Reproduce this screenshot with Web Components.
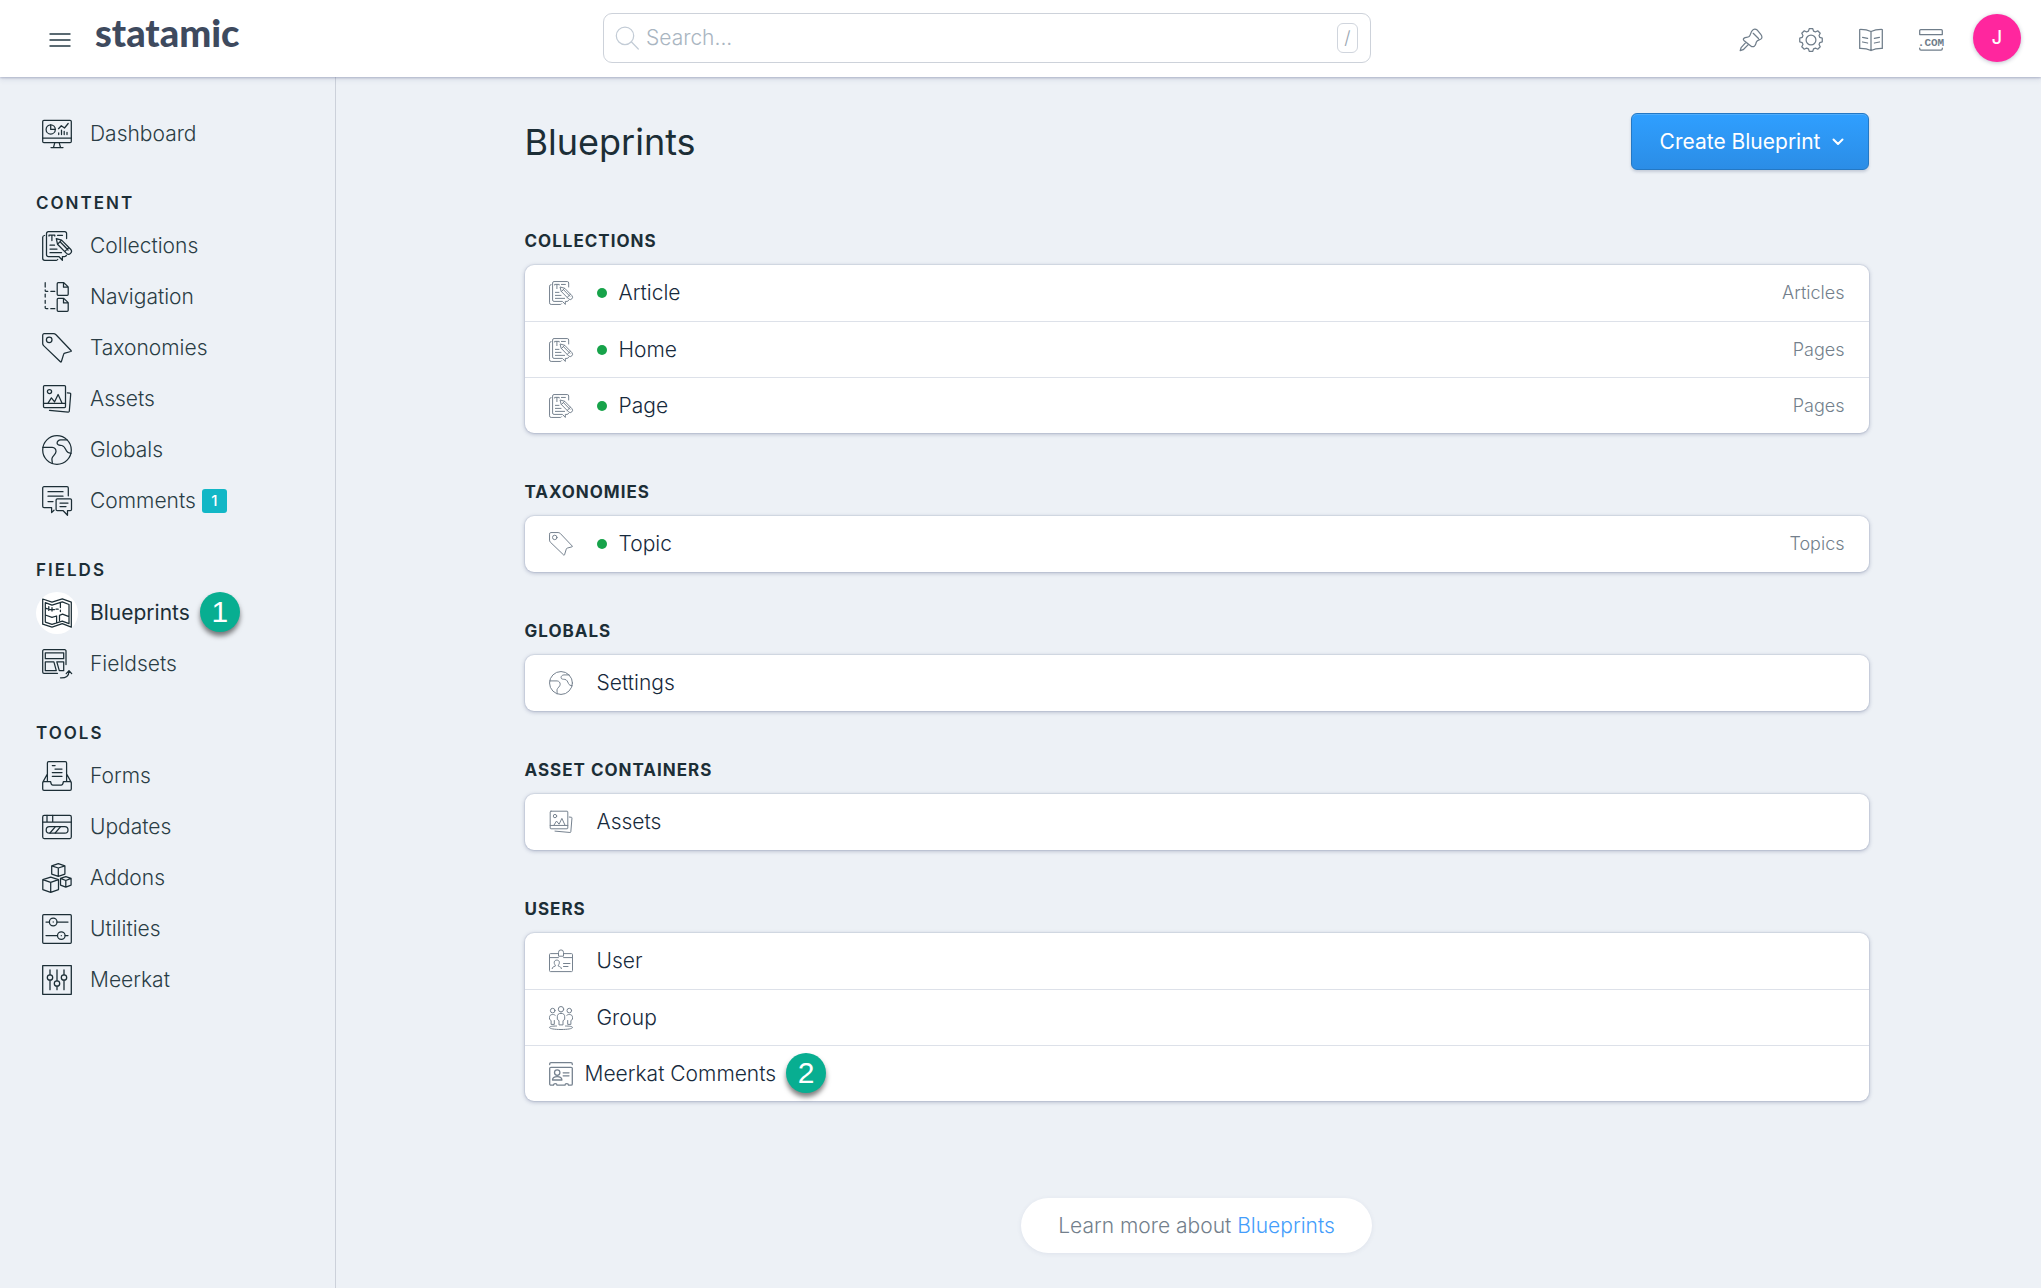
<!DOCTYPE html>
<html lang="en">
<head>
<meta charset="utf-8">
<title>Blueprints</title>
<style>
  html, body { margin: 0; min-height: 100%; }
  body {
    --canvas: #edf1f6;
    --ink: #1c2e36;
    --muted: #737f8c;
    --line: #dde1e9;
    background: var(--canvas);
    color: var(--ink);
    font-family: Inter, "Liberation Sans", sans-serif;
    font-size: 21px;
    line-height: 30px;
    font-weight: 300;
  }
</style>
</head>
<body>
<cp-app>
  <cp-header slot="header"></cp-header>
  <cp-sidebar slot="sidebar">
    <nav-group>
      <nav-item icon="dashboard">Dashboard</nav-item>
    </nav-group>
    <nav-group heading="Content">
      <nav-item icon="collections">Collections</nav-item>
      <nav-item icon="navigation">Navigation</nav-item>
      <nav-item icon="taxonomies">Taxonomies</nav-item>
      <nav-item icon="assets">Assets</nav-item>
      <nav-item icon="globals">Globals</nav-item>
      <nav-item icon="comments" count="1">Comments</nav-item>
    </nav-group>
    <nav-group heading="Fields">
      <nav-item icon="blueprints" current>Blueprints<step-marker slot="after">1</step-marker></nav-item>
      <nav-item icon="fieldsets">Fieldsets</nav-item>
    </nav-group>
    <nav-group heading="Tools">
      <nav-item icon="forms">Forms</nav-item>
      <nav-item icon="updates">Updates</nav-item>
      <nav-item icon="addons">Addons</nav-item>
      <nav-item icon="utilities">Utilities</nav-item>
      <nav-item icon="meerkat">Meerkat</nav-item>
    </nav-group>
  </cp-sidebar>

  <page-title>Blueprints<create-button slot="action">Create Blueprint</create-button></page-title>
  <blueprint-section heading="Collections">
    <blueprint-row icon="collections" published meta="Articles">Article</blueprint-row>
    <blueprint-row icon="collections" published meta="Pages">Home</blueprint-row>
    <blueprint-row icon="collections" published meta="Pages">Page</blueprint-row>
  </blueprint-section>
  <blueprint-section heading="Taxonomies">
    <blueprint-row icon="taxonomies" published meta="Topics">Topic</blueprint-row>
  </blueprint-section>
  <blueprint-section heading="Globals">
    <blueprint-row icon="globals">Settings</blueprint-row>
  </blueprint-section>
  <blueprint-section heading="Asset Containers">
    <blueprint-row icon="assets">Assets</blueprint-row>
  </blueprint-section>
  <blueprint-section heading="Users">
    <blueprint-row icon="user">User</blueprint-row>
    <blueprint-row icon="group">Group</blueprint-row>
    <blueprint-row icon="comment-card" compact>Meerkat Comments<step-marker slot="after">2</step-marker></blueprint-row>
  </blueprint-section>
  <docs-callout topic="Blueprints">Learn more about</docs-callout>
</cp-app>

<script>
// Outline of the settings cog: eight rounded teeth around a ring.
function cogPath() {
  const pts = [];
  for (let i = 0; i < 8; i++) {
    for (const [d, r] of [[-16, 9.2], [-9, 11.4], [9, 11.4], [16, 9.2]]) {
      const a = (i * 45 + d - 90) * Math.PI / 180;
      pts.push((12 + r * Math.cos(a)).toFixed(2) + ' ' + (12 + r * Math.sin(a)).toFixed(2));
    }
  }
  return 'M' + pts.join('L') + 'z';
}

// name: [viewBox size, stroke width, markup]
const ICONS = {
  dashboard: [30, 1.25, '<rect x=".7" y="1.4" width="28.6" height="22.3" rx="1.2"/><path d="M.7 19h28.6M12.8 23.7l-1.3 4.8M17.2 23.7l1.3 4.8M9 28.5h12M16.5 9.7l2.8-3 3.2 2.3 3.7-4.5M16.7 15.5v-1.6M19.5 15.5v-4.5M22.2 15.5v-3.2M25 15.5v-2.2"/><circle cx="8.7" cy="10.4" r="4.6"/><path d="M8.7 5.8v4.6h4.6"/>'],
  collections: [30, 1.25, '<path d="M24.6 7.5V2.5A1.8 1.8 0 0 0 22.8.7H6.3a1.8 1.8 0 0 0-1.8 1.8v21.2a1.8 1.8 0 0 0 1.8 1.8h10.5l3.6 3.8v-3.8h2.4a1.8 1.8 0 0 0 1.6-1.2"/><path d="M2.6 4.5A2 2 0 0 0 .7 6.4v20.9a2 2 0 0 0 2 2h11.6a2 2 0 0 0 1.4-.8M7 5V4.2h5.8V5M9.9 4.2v5.3M15.5 4.3h5M8 14.2h4.5M8 18h7M8 21.7h11.5"/><path d="M14.3 7.6l5.3 1.5 9 9.2a2.9 2.9 0 0 1-4.1 4.1l-9-9.2zM19.6 9.1l-4.1 4.1M18.3 11l7.8 8M26.8 16.6l-4.1 4"/>'],
  navigation: [30, 1.25, '<path d="M16.2.7h5.6l4.4 4.2v7.4a1 1 0 0 1-1 1h-9a1 1 0 0 1-1-1V1.7a1 1 0 0 1 1-1zM21.5.9v4.3h4.6M16.2 16.4h5.6l4.4 4.2v7.7a1 1 0 0 1-1 1h-9a1 1 0 0 1-1-1V17.4a1 1 0 0 1 1-1zM21.5 16.6v4.3h4.6"/><path d="M3.2.7V5M3.2 12v3M3.2 18.3v3M3.2 24.3v1.4a1 1 0 0 0 1 1h1.6M8.8 26.7h4M3.2 7.8v.6a.9.9 0 0 0 .9.9h1.7M8.8 9.3h4"/>'],
  taxonomies: [30, 1.25, '<path d="M.7 2.2A1.5 1.5 0 0 1 2.2.7h9.2a4 4 0 0 1 2.6 1l15 15.8c.5.5.4.8-.2 1l-5.9 1.6a1.8 1.8 0 0 0-1.3 1.3l-2.2 7.1c-.2.6-.6.7-1 .3L1.6 12.6a3 3 0 0 1-.9-2z"/><circle cx="7.2" cy="6.8" r="2.8"/>'],
  assets: [30, 1.25, '<rect x="1.5" y="1.5" width="22" height="22" rx="1"/><path d="M1.5 19.3h22M6 19.2l3.4-5.4 3.2 4 3.5-7.3 4 8.7M25.3 8.8l2.6.3a.9.9 0 0 1 .8 1L27.3 27.2a1 1 0 0 1-1.1.9L7.5 26.4"/><circle cx="7.5" cy="7.6" r="2.1"/>'],
  globals: [30, 1.25, '<circle cx="15" cy="15" r="14.3"/><path d="M.9 12.4h9.3c2.5.2 3.8 2.2 3.8 4.2 0 2.7-3.5 4.4-4 6.8-.4 1.9.6 3.6.2 5.1M25 4.9h-6.3c-2.3.1-3.7 1.7-3.6 3.4.2 2.3 2.6 1.9 4.7 2.2 2.6.4 3.3 2.5 4.6 5.3.8 1.7 2 2.3 4.6 2.6"/>'],
  comments: [30, 1.25, '<path d="M26.3 9.8V2A1.3 1.3 0 0 0 25 .7H2A1.3 1.3 0 0 0 .7 2v18.2a1.3 1.3 0 0 0 1.3 1.3h7.6v5l2.4-2.3M6 5.7h15M6 10.2h15M6 15.5h5"/><path d="M15.3 12.8h13a1.2 1.2 0 0 1 1.2 1.2v9.5a1.2 1.2 0 0 1-1.2 1.2h-2.8v4.6l-4.3-4.6h-5.9a1.2 1.2 0 0 1-1.2-1.2V14a1.2 1.2 0 0 1 1.2-1.2zM18 17h8M18 20.6h6"/>'],
  blueprints: [30, 1.25, '<path d="M.7 1L10 4.2 20.3.8l9 3.4v25l-9-3.5L10 29.2.7 26.2z"/><path d="M3.3 4.7L10 7.2l10.3-3.3L27 6.5v19.2l-6.7-2.5L10 26.4l-6.7-2.3zM3.3 17l6.7 2.3 4.6-1.3v6.8M17.5 17.3l3-1.1L27 18.6M17.5 17.3v5.2M4 10.3l4 1.2h4.5M6.8 8.6v3.8M10 9.5v3.6M18.4 5.2v4.3M18.4 12v1.5M14 11.2h2.2"/>'],
  fieldsets: [30, 1.25, '<path d="M24 15.5V2A1.3 1.3 0 0 0 22.7.7H2A1.3 1.3 0 0 0 .7 2v21a1.3 1.3 0 0 0 1.3 1.3h13.5"/><path d="M3.3 3.8h18.4v5.9H3.3zM3.3 12.9h8.6l2.4 8.8h-11zM14.8 12.9h6.9v8.8h-4.4zM18.5 28.8c5.5.2 8.5-1.6 8.5-6.8M24.2 24.6l2.8-3 2.7 3"/>'],
  forms: [30, 1.25, '<path d="M2 20.6h6.6c.3 2.2 1 3.4 2.3 3.4h8.2c1.3 0 2-1.2 2.3-3.4H28a1.3 1.3 0 0 1 1.3 1.3V28a1.3 1.3 0 0 1-1.3 1.3H2A1.3 1.3 0 0 1 .7 28v-6.1A1.3 1.3 0 0 1 2 20.6zM5.4 20.4V2A1.3 1.3 0 0 1 6.7.7h16.6A1.3 1.3 0 0 1 24.6 2v18.4M5.2 13.3L1 20.9M24.8 13.3l4.2 7.6M10.3 4.6h2.8M13 8h7M10.3 11.6H20M10.3 15.3H20"/>'],
  updates: [30, 1.25, '<rect x=".7" y="3.4" width="28.6" height="23.2" rx="1.5"/><path d="M.7 10h28.6M5 3.4V10M10.7 3.4V10"/><rect x="4.2" y="14.7" width="21.8" height="6.4" rx="3.2"/><path d="M8 21l5.2-6.2M13.2 21l5.2-6.2"/>'],
  addons: [30, 1.25, '<path d="M16.3.7l6.6 2.2v8.2l-6.6 2.2-6.6-2.2V2.9zM9.7 2.9L16.3 5l6.6-2.1M16.3 5v8.3M8.7 14.1l7.8 2.5v10l-7.8 2.8-7.9-2.8v-10zM.8 16.6l7.9 2.8 7.8-2.8M8.7 19.4v10M23.8 13.6l5.3 1.8v6.7l-5.3 2.1-5.3-2.1v-6.7zM18.5 15.4l5.3 2.1 5.3-2.1M23.8 17.5v6.7"/>'],
  utilities: [30, 1.25, '<rect x=".7" y=".7" width="28.6" height="28.6" rx="1"/><path d="M4 8h3.4M15 8h11M4 21.6h11.5M23.1 21.6H26M11.2 7.9v.2M19.3 21.5v.2"/><circle cx="11.2" cy="8" r="3.8"/><circle cx="19.3" cy="21.6" r="3.8"/>'],
  meerkat: [30, 1.3, '<path d="M.7.7h28.6v28.6H.7z"/><path d="M8 5v4.8M8 15.2v9.5M15 5v10.8M15 21.2v3.5M22 5v4.8M22 15.2v9.5"/><circle cx="8" cy="12.5" r="2.7"/><circle cx="15" cy="18.5" r="2.7"/><circle cx="22" cy="12.5" r="2.7"/>'],
  user: [24, 1, '<path d="M9.5 4.6h-8a1 1 0 0 0-1 1v16a1 1 0 0 0 1 1h21a1 1 0 0 0 1-1v-16a1 1 0 0 0-1-1h-8M.5 8.6h8.9M14.6 8.6h8.9"/><path d="M9.5 6.8V3.4a2.5 2.5 0 0 1 5 0v3.4zM3.2 19.6c.2-1.8 1.2-1.7 3.1-2.5v-1c-1-1-1.2-2-1-3.2.3-2.4 4.8-2.4 5 0 .2 1.2-.1 2.2-1 3.2v1c1.900.8 2.900.7 3.100 2.500M14.500 14.500h6.500M14.500 17.500h4.500"/>'],
  group: [24, 1, '<circle cx="12" cy="3.200" r="2.700"/><circle cx="3.700" cy="4.600" r="2.300"/><circle cx="20.300" cy="4.600" r="2.300"/><path d="M12 7.300c-2.800 0-3.700 1.500-3.700 3.500v2.600l1.700 1.300v4.200h4v-4.200l1.700-1.300v-2.600c0-2-.9-3.500-3.700-3.500zM6.200 9.300c-.7-.6-1.500-.8-2.500-.8-2.300 0-3.200 1.300-3.200 2.800v2l1.600 1.200v3.900h3.200v-3.900M17.800 9.300c.7-.6 1.500-.8 2.500-.8 2.300 0 3.200 1.300 3.200 2.800v2l-1.600 1.200v3.900h-3.200v-3.900M7.500 20c-4 0-7 .5-7 1.400 0 1.300 5 2.100 11.500 2.100s11.500-.8 11.500-2.100c0-.9-3-1.400-7-1.400"/>'],
  'comment-card': [24, 1.3, '<path d="M.7 2.600V2A1.300 1.300 0 0 1 2 .7h20A1.300 1.300 0 0 1 23.300 2v.6M2 5.300h20a1.200 1.200 0 0 1 1.300 1.200v15.400a1.300 1.300 0 0 1-1.300 1.300h-2.500c0-2-3.500-2-3.500 0H8c0-2-3.500-2-3.500 0H2A1.300 1.300 0 0 1 .7 21.900V6.500A1.200 1.200 0 0 1 2 5.300z"/><circle cx="8.200" cy="10.600" r="2.700"/><path d="M3.500 18c.2-4.500 9.200-4.500 9.400 0zM14.200 10.800H20M14.200 13.800H20"/>'],
  pin: [24, 1.25, '<path d="M13.200 2.700C14.500 1 16.800 1 18.500 2.300l3.300 4c1.600 2 1.500 4-.2 5-1.700.9-3.400 1-4.200 2.700-.6 1.500-.5 2.700-1.800 3.900-1.200 1-2.600 1-3.800 0L4.900 12.400c-.8-.8-.7-1.700.3-2.300 1.500-.9 3.500-.5 4.900-1.600 1.600-1.500 1.500-4 3.100-5.800zM6.900 14.300l-4.800 5.300-.9 3.100 3-1 5.300-5.300M14.200 5.300l5.300 5.200"/>'],
  cog: [24, 1.25, '<path d="' + cogPath() + '"/><circle cx="12" cy="12" r="4.900"/>'],
  book: [24, 1.25, '<path d="M12 3.500C8.500 1.900 4.500 1.400.7 1.500v18.900c4-.1 8 .5 11.300 2.100 3.300-1.600 7.300-2.200 11.300-2.100V1.500c-3.800-.1-7.800.4-11.300 2zM12 3.500v19M3.600 9.400l5 1M3.600 14l5 1M20.400 9.400l-5 1M20.400 14l-5 1"/>'],
  site: [24, 1.25, '<path d="M.7 6.500V2.700a1 1 0 0 1 1-1h20.600a1 1 0 0 1 1 1v3.800zM.7 20v.8a1.300 1.300 0 0 0 1.300 1.300h20a1.300 1.300 0 0 0 1.300-1.300V20"/><text x="12" y="18" text-anchor="middle" font-family="Liberation Sans Narrow, Liberation Mono, monospace" font-weight="700" font-size="11" fill="currentColor" stroke="none">.COM</text>'],
  search: [24, 1.25, '<circle cx="10" cy="9.800" r="8.700"/><path d="M16.300 15.800l7 7.200"/>'],
  menu: [24, 2, '<path d="M1.500 6h21M1.500 12h21M1.500 18h21" stroke-linecap="butt"/>'],
  chevron: [12, 2, '<path d="M1.500 3.500L6 8l4.500-4.500"/>']
};

function define(name, render) {
  customElements.define(name, class extends HTMLElement {
    constructor() {
      super();
      this.attachShadow({ mode: 'open' });
    }
    connectedCallback() {
      this.shadowRoot.innerHTML = render(this);
    }
  });
}
const attr = (el, name) => el.getAttribute(name) || '';

define('ui-icon', el => {
  const [size, stroke, body] = ICONS[attr(el, 'name')];
  return `<style>
    :host { display: block; flex: none; width: var(--icon-size, 24px); height: var(--icon-size, 24px); }
    svg { display: block; width: 100%; height: 100%; overflow: visible; }
  </style>
  <svg viewBox="0 0 ${size} ${size}" fill="none" stroke="currentColor" stroke-width="${stroke}" stroke-linecap="round" stroke-linejoin="round" aria-hidden="true">${body}</svg>`;
});

define('step-marker', () => `<style>
  :host {
    display: flex; flex: none; align-items: center; justify-content: center;
    width: 40px; height: 40px; border-radius: 50%; margin: 0 0 2px 10px;
    background: #08ae91; color: #fff;
    font: 400 30px/40px "Liberation Sans", sans-serif;
    box-shadow: 0 4px 5px rgba(0, 0, 0, .5);
  }
</style><slot></slot>`);

define('cp-app', () => `<style>
  :host { display: flex; flex-direction: column; min-height: 100vh; }
  .body { display: flex; flex: 1; }
  main { flex: 1; min-width: 0; padding: 36px 24px 35px 40px; }
  .content { max-width: 1344px; margin: 0 auto; }
</style>
<slot name="header"></slot>
<div class="body">
  <slot name="sidebar"></slot>
  <main><div class="content"><slot></slot></div></main>
</div>`);

define('cp-header', () => `<style>
  :host {
    display: grid; grid-template-columns: 9fr minmax(0, 768px) 10fr; align-items: center;
    box-sizing: border-box; height: 77px; padding-bottom: 1px; position: relative; background: #fff;
    box-shadow: 0 1px 2px rgba(60, 70, 120, .28), 0 2px 6px rgba(60, 70, 120, .14);
  }
  button, .tool { border: 0; padding: 0; background: none; color: inherit; font: inherit; cursor: pointer; }
  .brand { display: flex; align-items: center; gap: 23px; padding-left: 48px; }
  .toggle { color: #5a6a72; margin-top: 4px; }
  .logo {
    color: #3e4a5e; text-decoration: none; margin-bottom: 12px;
    font: 900 38px/44px Lato, sans-serif;
  }
  .search {
    display: flex; align-items: center; gap: 7px; box-sizing: border-box; height: 50px;
    padding: 0 12px 0 11px; border: 1px solid #cdd2da; border-radius: 9px; color: #c3ccd6; background: #fff;
  }
  .search label { display: block; }
  input { flex: 1; min-width: 0; border: 0; padding: 0; background: none; outline: 0; font: inherit; color: var(--ink); }
  input::placeholder { color: #a9b5c1; opacity: 1; }
  kbd {
    box-sizing: border-box; width: 21px; height: 30px; border: 1px solid #d0d5dd; border-radius: 6px;
    font: 300 18px/28px Inter, sans-serif; text-align: center; color: #98a5b1;
  }
  .tools { display: flex; align-items: center; justify-content: flex-end; gap: 36px; padding-right: 20px; color: #6f7d8a; }
  .tool { margin-top: 4px; }
  .avatar {
    width: 48px; height: 48px; border-radius: 50%; margin-left: -6px;
    background: #ff269e; color: #fff; font-size: 18px; font-weight: 500; line-height: 48px;
    box-shadow: 0 1px 4px rgba(40, 50, 90, .3);
  }
</style>
<div class="brand">
  <button class="toggle" aria-label="Toggle navigation"><ui-icon name="menu"></ui-icon></button>
  <a class="logo" href="#">statamic</a>
</div>
<div class="search">
  <label for="q" aria-label="Search"><ui-icon name="search"></ui-icon></label>
  <input id="q" type="text" placeholder="Search...">
  <kbd>/</kbd>
</div>
<div class="tools">
  <button class="tool" aria-label="Pin to favorites"><ui-icon name="pin"></ui-icon></button>
  <button class="tool" aria-label="Preferences"><ui-icon name="cog"></ui-icon></button>
  <a class="tool" href="#" aria-label="Documentation"><ui-icon name="book"></ui-icon></a>
  <a class="tool" href="#" aria-label="View site"><ui-icon name="site"></ui-icon></a>
  <button class="avatar" aria-label="Account">J</button>
</div>`);

define('cp-sidebar', () => `<style>
  :host { display: block; box-sizing: border-box; flex: none; width: 336px; padding: 31px 36px; border-right: 1px solid #ccd1da; }
  nav { display: flex; flex-direction: column; gap: 27px; }
</style><nav><slot></slot></nav>`);

define('nav-group', el => `<style>
  :host { display: block; }
  h2 { margin: 0; font-size: 17px; line-height: 34px; font-weight: 600; letter-spacing: 2px; text-transform: uppercase; }
</style>${attr(el, 'heading') && `<h2>${attr(el, 'heading')}</h2>`}<slot></slot>`);

define('nav-item', el => `<style>
  :host { display: flex; align-items: center; height: 51px; }
  a { display: flex; align-items: center; gap: 12px; color: #2a3d45; text-decoration: none; }
  .icon { display: flex; align-items: center; justify-content: center; width: 42px; height: 42px; border-radius: 50%; color: var(--ink); }
  ui-icon { --icon-size: 30px; }
  :host([current]) a { color: var(--ink); font-weight: 400; }
  :host([current]) .icon { background: #fff; }
  .count { min-width: 25px; margin-left: 6px; border-radius: 3px; background: #12b7c6; color: #fff; font-size: 15px; line-height: 24px; font-weight: 500; text-align: center; }
</style>
<a href="#"><span class="icon"><ui-icon name="${attr(el, 'icon')}"></ui-icon></span><span><slot></slot></span></a>
${el.hasAttribute('count') ? `<span class="count">${attr(el, 'count')}</span>` : ''}<slot name="after"></slot>`);

define('page-title', () => `<style>
  :host { display: flex; align-items: center; justify-content: space-between; margin-bottom: 54px; }
  h1 { margin: 0; font-size: 36px; line-height: 44px; font-weight: 400; }
</style><h1><slot></slot></h1><slot name="action"></slot>`);

define('create-button', () => `<style>
  :host { display: block; }
  button {
    display: flex; align-items: center; gap: 11px; height: 57px; padding: 0 24px 0 28px;
    border: 1px solid #2478c4; border-radius: 6px; cursor: pointer;
    background: linear-gradient(#2f9fff, #2b8de6); color: #fff; font: 400 21px/30px Inter, sans-serif;
    box-shadow: inset 0 1px 0 #4fadfc, 0 2px 3px rgba(40, 60, 100, .2);
  }
  ui-icon { --icon-size: 12px; }
</style><button><slot></slot><ui-icon name="chevron"></ui-icon></button>`);

define('blueprint-section', el => `<style>
  :host { display: block; margin-bottom: 42px; }
  h2 { margin: 0 0 7px; font-size: 17px; line-height: 34px; font-weight: 700; letter-spacing: 1px; text-transform: uppercase; }
  .card { border-radius: 9px; background: #fff; box-shadow: 0 0 0 1px rgba(60, 80, 130, .07), 0 1px 4px rgba(50, 60, 110, .35); }
</style><h2>${attr(el, 'heading')}</h2><div class="card"><slot></slot></div>`);

define('blueprint-row', el => `<style>
  :host { display: flex; align-items: center; box-sizing: border-box; height: 56px; padding: 0 24px; border-top: 1px solid var(--line); }
  :host(:first-child) { border-top: 0; }
  ui-icon { color: #76828f; margin-right: 24px; }
  :host([compact]) ui-icon { margin-right: 12px; }
  .dot { width: 10px; height: 10px; margin-right: 12px; border-radius: 50%; background: #17a34a; }
  a { color: #172a3c; text-decoration: none; }
  .meta { margin-left: auto; color: var(--muted); font-size: 18px; }
</style>
<ui-icon name="${attr(el, 'icon')}"></ui-icon>
${el.hasAttribute('published') ? '<span class="dot"></span>' : ''}
<a href="#"><slot></slot></a><slot name="after"></slot>
${el.hasAttribute('meta') ? `<span class="meta">${attr(el, 'meta')}</span>` : ''}`);

define('docs-callout', el => `<style>
  :host { display: flex; justify-content: center; margin-top: 97px; }
  p { margin: 0; padding: 0 37px; border-radius: 28px; background: #fff; color: var(--muted); line-height: 55px; box-shadow: 0 1px 5px rgba(50, 70, 110, .08); }
  a { color: #449dfb; text-decoration: none; }
</style><p><slot></slot> <a href="#">${attr(el, 'topic')}</a></p>`);
</script>
</body>
</html>
